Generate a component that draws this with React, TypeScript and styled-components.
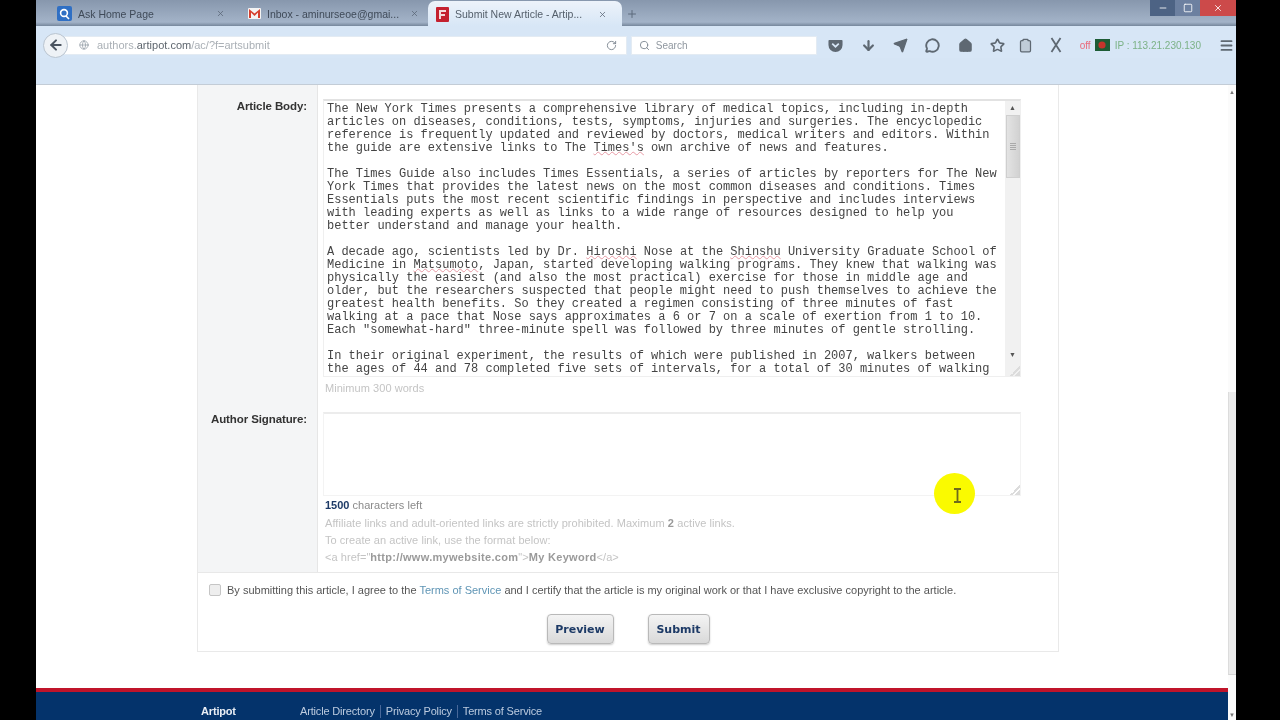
import { Fragment } from "react";
import styled, { createGlobalStyle } from "styled-components";
import {
  ArrowDown,
  ArrowLeft,
  Clipboard,
  Globe,
  Home,
  Menu,
  MessageCircle,
  Minus,
  Plus,
  RotateCw,
  Search,
  Send,
  Square,
  Star,
  X,
} from "lucide-react";

const GlobalStyle = createGlobalStyle`
  html, body {
    margin: 0;
    background: #000;
    overflow: hidden;
  }
  * {
    box-sizing: border-box;
  }
`;

const Screen = styled.div`
  width: 1280px;
  height: 720px;
  padding: 0 44px 0 36px;
  background: #000;
  overflow: hidden;
`;

const Browser = styled.div`
  position: relative;
  width: 1200px;
  height: 720px;
  display: flex;
  flex-direction: column;
  background: #fff;
  font-family: "Liberation Sans", Arial, sans-serif;
  filter: blur(0.7px);
`;

const TabBar = styled.div`
  height: 26px;
  flex: none;
  display: flex;
  padding-left: 10px;
  background: linear-gradient(#8797ad, #a3b3c8 85%, #76879c);
`;

const Tab = styled.div<{ $active?: boolean; $width: number; $closeGap: number }>`
  width: ${(p) => p.$width}px;
  height: ${(p) => (p.$active ? 26 : 25)}px;
  margin-top: 1px;
  padding: 0 ${(p) => p.$closeGap}px 0 ${(p) => (p.$active ? 8 : 11)}px;
  display: flex;
  align-items: center;
  gap: 6px;
  font-size: 10.5px;
  color: ${(p) => (p.$active ? "#55606c" : "#3f4a58")};
  background: ${(p) => (p.$active ? "linear-gradient(#edf3fa, #d6e6f6)" : "transparent")};
  border-radius: ${(p) => (p.$active ? "7px 7px 0 0" : "0")};
`;

const TabTitle = styled.span`
  flex: 1;
  white-space: nowrap;
  overflow: hidden;
`;

const TabClose = styled(X)`
  width: 9px;
  height: 9px;
  flex: none;
  color: #5a6675;
`;

const NewTab = styled(Plus)`
  width: 12px;
  height: 12px;
  margin: 8px 0 0 4px;
  color: #5d6b7c;
`;

const WindowControls = styled.div`
  margin-left: auto;
  height: 16px;
  display: flex;
  color: #fff;
`;

const WindowButton = styled.div<{ $width: number; $bg: string }>`
  width: ${(p) => p.$width}px;
  display: flex;
  align-items: center;
  justify-content: center;
  background: ${(p) => p.$bg};
  svg {
    width: 10px;
    height: 10px;
  }
`;

const Toolbar = styled.div`
  height: 32px;
  flex: none;
  display: flex;
  align-items: center;
  padding: 6px 0 0 7px;
  background: #d7e6f6;
`;

const BackButton = styled.div`
  width: 25px;
  height: 25px;
  flex: none;
  display: flex;
  align-items: center;
  justify-content: center;
  border-radius: 50%;
  border: 1px solid #b9c4d0;
  background: #eef2f6;
  color: #4a5460;
  z-index: 1;
`;

const UrlBar = styled.div`
  width: 565px;
  height: 19px;
  margin-left: -6px;
  padding: 0 2px 0 16px;
  display: flex;
  align-items: center;
  background: #fff;
  border: 1px solid #e3ebf3;
  font-size: 11px;
  color: #aab0b6;
`;

const UrlText = styled.span`
  margin-left: 8px;
  flex: 1;
  b {
    font-weight: 400;
    color: #5e666e;
  }
`;

const SearchBox = styled.div`
  width: 186px;
  height: 19px;
  margin-left: 4px;
  padding-left: 7px;
  display: flex;
  align-items: center;
  gap: 6px;
  background: #fff;
  border: 1px solid #e3ebf3;
  font-size: 10px;
  color: #8f979f;
`;

const IconRow = styled.div`
  margin-left: 2px;
  padding-left: 4px;
  display: flex;
  align-items: center;
  color: #5e6872;
`;

const ToolIcon = styled.div<{ $width: number }>`
  width: ${(p) => p.$width}px;
  flex: none;
  display: flex;
  justify-content: center;
  svg {
    width: 15px;
    height: 15px;
  }
`;

const ProxyStatus = styled.div`
  margin-left: 2px;
  display: flex;
  align-items: center;
  white-space: nowrap;
  font-size: 10px;
  color: #7cb287;
`;

const ProxyOff = styled.span`
  margin-right: 4px;
  color: #ea6a7c;
`;

const ProxyFlag = styled.svg`
  width: 15px;
  height: 12px;
  margin-right: 5px;
`;

const MenuButton = styled(ToolIcon)`
  margin-left: 15px;
  color: #5e6872;
`;

const BookmarksBar = styled.div`
  height: 27px;
  flex: none;
  background: #d6e5f5;
  border-bottom: 1px solid #c3ccd6;
`;

const Viewport = styled.div`
  flex: 1;
  min-height: 0;
  display: flex;
  overflow: hidden;
`;

const Content = styled.div`
  width: 1192px;
  flex: none;
  display: flex;
  flex-direction: column;
`;

const Card = styled.div`
  width: 862px;
  margin-left: 161px;
  border: 1px solid #e9e9e9;
  border-top: 0;
`;

const FormBody = styled.div`
  height: 488px;
  display: flex;
  border-bottom: 1px solid #e8e8e8;
`;

const LabelColumn = styled.div`
  width: 120px;
  flex: none;
  background: #f4f5f6;
  border-right: 1px solid #e6e6e6;
  display: flex;
  flex-direction: column;
  align-items: flex-end;
  padding: 15px 10px 0 0;
`;

const FieldLabel = styled.label<{ $height: number }>`
  height: ${(p) => p.$height}px;
  font-size: 11.5px;
  font-weight: 700;
  letter-spacing: -0.1px;
  color: #333;
`;

const FieldColumn = styled.div`
  flex: 1;
  padding: 14px 0 0 5px;
  display: flex;
  flex-direction: column;
`;

const ArticleBox = styled.div`
  position: relative;
  width: 698px;
  height: 278px;
  flex: none;
  display: flex;
  border: 1px solid #efefef;
  border-top: 2px solid #e2e2e2;
  overflow: hidden;
`;

const ArticleText = styled.div`
  flex: 1;
  padding: 2px 0 0 3px;
  font-family: "Liberation Mono", "Courier New", monospace;
  font-size: 12px;
  line-height: 13px;
  color: #444;
  white-space: pre;
  overflow: hidden;
`;

const Paragraph = styled.p`
  margin: 0 0 13px;
`;

const Misspelled = styled.span`
  text-decoration: underline wavy #e79aa5 1px;
  text-underline-offset: 0;
`;

const BoxScrollbar = styled.div`
  width: 15px;
  flex: none;
  display: flex;
  flex-direction: column;
  align-items: center;
  background: #f1f1f1;
  font-size: 7px;
  color: #555;
`;

const ScrollArrow = styled.div`
  height: 14px;
  flex: none;
  line-height: 14px;
`;

const BoxThumb = styled.div`
  width: 14px;
  height: 63px;
  flex: none;
  display: flex;
  align-items: center;
  justify-content: center;
  background: linear-gradient(90deg, #e3e3e3, #d2d2d2);
  border: 1px solid #cfcfcf;
  &::after {
    content: "";
    width: 6px;
    height: 8px;
    background: repeating-linear-gradient(#aaa 0 1px, transparent 1px 2px);
  }
`;

const BoxSpacer = styled.div`
  flex: 1;
`;

const ResizeGrip = styled.div`
  position: absolute;
  right: 0;
  bottom: 0;
  width: 10px;
  height: 10px;
  background: linear-gradient(135deg, transparent 50%, #dcdcdc 50%, #dcdcdc 62%, transparent 62%, transparent 75%, #dcdcdc 75%);
`;

const Hint = styled.div<{ $height?: number }>`
  height: ${(p) => p.$height ?? 17}px;
  display: flex;
  align-items: center;
  white-space: pre;
  font-size: 11px;
  letter-spacing: 0.05px;
  color: #c4c4c4;
  padding-left: 2px;
  b {
    color: #9a9a9a;
    letter-spacing: 0.3px;
  }
`;

const CharCount = styled(Hint)`
  color: #8a8a8a;
  b {
    color: #1d3a66;
    margin-right: 3px;
    letter-spacing: 0;
  }
`;

const SignatureBox = styled.div`
  position: relative;
  width: 698px;
  height: 84px;
  margin-top: 14px;
  flex: none;
  border: 1px solid #f3f3f3;
  border-top: 2px solid #ececec;
`;

const AgreementRow = styled.div`
  height: 34px;
  padding-left: 11px;
  display: flex;
  align-items: center;
  gap: 6px;
  white-space: pre;
  font-size: 11px;
  color: #555;
`;

const CheckBox = styled.span`
  width: 12px;
  height: 12px;
  flex: none;
  border: 1px solid #c5c5c5;
  border-radius: 2px;
  background: #eee;
`;

const TermsLink = styled.a`
  color: #5f95b5;
`;

const ButtonRow = styled.div`
  height: 37px;
  padding-top: 7px;
  display: flex;
  justify-content: center;
  gap: 34px;
  margin-bottom: 7px;
`;

const ActionButton = styled.button<{ $width: number }>`
  width: ${(p) => p.$width}px;
  height: 30px;
  padding: 0;
  border: 1px solid #b9b9b9;
  border-radius: 4px;
  background: linear-gradient(#f4f4f4, #d9d9d9);
  box-shadow: 0 1px 2px #ccc;
  font-family: "DejaVu Sans", Verdana, sans-serif;
  font-size: 11px;
  font-weight: 700;
  color: #1d3a66;
`;

const Footer = styled.footer`
  height: 32px;
  margin-top: 36px;
  flex: none;
  padding: 13px 0 0 165px;
  display: flex;
  background: #04336b;
  border-top: 4px solid #c0142a;
  font-size: 11px;
  color: #bccbdf;
  letter-spacing: -0.17px;
`;

const FooterBrand = styled.strong`
  width: 99px;
  color: #e9eef5;
`;

const FooterLink = styled.a<{ $first?: boolean }>`
  height: 13px;
  line-height: 12px;
  padding: 0 5px;
  padding-left: ${(p) => (p.$first ? 0 : 5)}px;
  border-left: ${(p) => (p.$first ? "0" : "1px solid #48689a")};
`;

const PageScrollbar = styled.div`
  width: 8px;
  flex: none;
  display: flex;
  flex-direction: column;
  align-items: center;
  background: #fbfbfb;
  font-size: 6px;
  color: #777;
  padding-top: 4px;
`;

const PageThumb = styled.div`
  width: 8px;
  height: 283px;
  margin-top: 297px;
  flex: none;
  background: #ebebeb;
  border-left: 1px solid #dcdcdc;
  border-bottom: 1px solid #d5d5d5;
`;

const PageArrowDown = styled.div`
  margin-top: auto;
  padding-bottom: 2px;
`;

const CursorSpot = styled.div`
  position: absolute;
  left: 898px;
  top: 473px;
  width: 41px;
  height: 41px;
  display: flex;
  align-items: center;
  justify-content: center;
  border-radius: 50%;
  background: #fafa00;
  color: #6e6a1c;
`;

const CursorBeam = styled.svg`
  width: 9px;
  height: 15px;
  margin: 3px 0 0 5px;
`;

const paragraphs = [
  [
    "The New York Times presents a comprehensive library of medical topics, including in-depth",
    "articles on diseases, conditions, tests, symptoms, injuries and surgeries. The encyclopedic",
    "reference is frequently updated and reviewed by doctors, medical writers and editors. Within",
    "the guide are extensive links to The Times's own archive of news and features.",
  ],
  [
    "The Times Guide also includes Times Essentials, a series of articles by reporters for The New",
    "York Times that provides the latest news on the most common diseases and conditions. Times",
    "Essentials puts the most recent scientific findings in perspective and includes interviews",
    "with leading experts as well as links to a wide range of resources designed to help you",
    "better understand and manage your health.",
  ],
  [
    "A decade ago, scientists led by Dr. Hiroshi Nose at the Shinshu University Graduate School of",
    "Medicine in Matsumoto, Japan, started developing walking programs. They knew that walking was",
    "physically the easiest (and also the most practical) exercise for those in middle age and",
    "older, but the researchers suspected that people might need to push themselves to achieve the",
    "greatest health benefits. So they created a regimen consisting of three minutes of fast",
    "walking at a pace that Nose says approximates a 6 or 7 on a scale of exertion from 1 to 10.",
    'Each "somewhat-hard" three-minute spell was followed by three minutes of gentle strolling.',
  ],
  [
    "In their original experiment, the results of which were published in 2007, walkers between",
    "the ages of 44 and 78 completed five sets of intervals, for a total of 30 minutes of walking",
  ],
];

const spellMarks = /(Times's|Hiroshi|Shinshu|Matsumoto)/;

function ArticleLine({ text }: { text: string }) {
  return (
    <div>
      {text.split(spellMarks).map((part, i) =>
        spellMarks.test(part) ? <Misspelled key={i}>{part}</Misspelled> : <Fragment key={i}>{part}</Fragment>
      )}
    </div>
  );
}

function AskIcon() {
  return (
    <svg width="15" height="15" viewBox="0 0 15 15" style={{ flex: "none" }}>
      <rect width="15" height="15" rx="2" fill="#2f6fc4" />
      <circle cx="7" cy="7" r="3.4" fill="none" stroke="#fff" strokeWidth="1.6" />
      <path d="M9 10l3 3" stroke="#fff" strokeWidth="1.6" />
    </svg>
  );
}

function GmailIcon() {
  return (
    <svg width="13" height="13" viewBox="0 0 13 13" style={{ flex: "none" }}>
      <rect width="13" height="11" y="1" rx="1" fill="#f4f4f4" />
      <path d="M1 2l5.5 4.5L12 2v9h-2V5.5L6.500 9 3 5.500V11H1z" fill="#d6402f" />
    </svg>
  );
}

function ArtipotIcon() {
  return (
    <svg width="13" height="15" viewBox="0 0 13 15" style={{ flex: "none" }}>
      <rect width="13" height="15" rx="1" fill="#c4202f" />
      <path d="M3 3h7v2H5v2h4v2H5v3H3z" fill="#f4d9db" />
    </svg>
  );
}

function PocketIcon() {
  return (
    <svg viewBox="0 0 16 16">
      <path d="M1.500 2h13a1 1 0 0 1 1 1v4.500a7.500 7.500 0 0 1-15 0V3a1 1 0 0 1 1-1z" fill="currentColor" />
      <path d="M4.500 6L8 9.300 11.500 6" fill="none" stroke="#d7e6f6" strokeWidth="1.800" />
    </svg>
  );
}

function TallCrossIcon() {
  return (
    <svg viewBox="0 0 12 16" style={{ width: 12, height: 16 }}>
      <path d="M1.500 1l9 14M10.500 1l-9 14" fill="none" stroke="currentColor" strokeWidth="1.800" />
    </svg>
  );
}

function App() {
  return (
    <Screen>
      <GlobalStyle />
      <Browser>
        <TabBar>
          <Tab $width={191} $closeGap={12}>
            <AskIcon />
            <TabTitle>Ask Home Page</TabTitle>
            <TabClose />
          </Tab>
          <Tab $width={191} $closeGap={9}>
            <GmailIcon />
            <TabTitle>Inbox - aminurseoe@gmai...</TabTitle>
            <TabClose />
          </Tab>
          <Tab $active $width={194} $closeGap={15}>
            <ArtipotIcon />
            <TabTitle>Submit New Article - Artip...</TabTitle>
            <TabClose />
          </Tab>
          <NewTab />
          <WindowControls>
            <WindowButton $width={25} $bg="#4d6384">
              <Minus />
            </WindowButton>
            <WindowButton $width={25} $bg="#6c80a0">
              <Square />
            </WindowButton>
            <WindowButton $width={36} $bg="#cc4a4a">
              <X />
            </WindowButton>
          </WindowControls>
        </TabBar>

        <Toolbar>
          <BackButton>
            <ArrowLeft size={16} strokeWidth={3} />
          </BackButton>
          <UrlBar>
            <Globe size={10} color="#9aa3ac" />
            <UrlText>
              authors.<b>artipot.com</b>/ac/?f=artsubmit
            </UrlText>
            <RotateCw size={11} color="#7d8790" style={{ marginRight: 7 }} />
          </UrlBar>
          <SearchBox>
            <Search size={11} color="#7d8790" />
            Search
          </SearchBox>
          <IconRow>
            <ToolIcon $width={26}>
              <PocketIcon />
            </ToolIcon>
            <ToolIcon $width={40}>
              <ArrowDown strokeWidth={3.5} />
            </ToolIcon>
            <ToolIcon $width={24}>
              <Send fill="currentColor" />
            </ToolIcon>
            <ToolIcon $width={40}>
              <MessageCircle strokeWidth={3} />
            </ToolIcon>
            <ToolIcon $width={25}>
              <Home fill="currentColor" />
            </ToolIcon>
            <ToolIcon $width={40}>
              <Star strokeWidth={2.6} />
            </ToolIcon>
            <ToolIcon $width={16}>
              <Clipboard fill="#c0ccd8" />
            </ToolIcon>
            <ToolIcon $width={44}>
              <TallCrossIcon />
            </ToolIcon>
          </IconRow>
          <ProxyStatus>
            <ProxyOff>off</ProxyOff>
            <ProxyFlag viewBox="0 0 15 12">
              <rect width="15" height="12" fill="#1d5c35" />
              <circle cx="7" cy="6" r="3.600" fill="#c4342c" />
            </ProxyFlag>
            IP : 113.21.230.130
          </ProxyStatus>
          <MenuButton $width={20}>
            <Menu strokeWidth={3} />
          </MenuButton>
        </Toolbar>

        <BookmarksBar />

        <Viewport>
          <Content>
            <Card>
              <FormBody>
                <LabelColumn>
                  <FieldLabel $height={313}>Article Body:</FieldLabel>
                  <FieldLabel $height={20}>Author Signature:</FieldLabel>
                </LabelColumn>
                <FieldColumn>
                  <ArticleBox>
                    <ArticleText>
                      {paragraphs.map((lines, i) => (
                        <Paragraph key={i}>
                          {lines.map((line) => (
                            <ArticleLine key={line} text={line} />
                          ))}
                        </Paragraph>
                      ))}
                    </ArticleText>
                    <BoxScrollbar>
                      <ScrollArrow>▲</ScrollArrow>
                      <BoxThumb />
                      <BoxSpacer />
                      <ScrollArrow>▼</ScrollArrow>
                      <ScrollArrow />
                    </BoxScrollbar>
                    <ResizeGrip />
                  </ArticleBox>
                  <Hint $height={21}>Minimum 300 words</Hint>
                  <SignatureBox>
                    <ResizeGrip />
                  </SignatureBox>
                  <CharCount $height={18}>
                    <b>1500</b>characters left
                  </CharCount>
                  <Hint>
                    Affiliate links and adult-oriented links are strictly prohibited. Maximum <b>2</b> active links.
                  </Hint>
                  <Hint>To create an active link, use the format below:</Hint>
                  <Hint>
                    {'<a href="'}
                    <b>http://www.mywebsite.com</b>
                    {'">'}
                    <b>My Keyword</b>
                    {"</a>"}
                  </Hint>
                </FieldColumn>
              </FormBody>
              <AgreementRow>
                <CheckBox />
                <span>
                  By submitting this article, I agree to the <TermsLink>Terms of Service</TermsLink> and I certify that
                  the article is my original work or that I have exclusive copyright to the article.
                </span>
              </AgreementRow>
              <ButtonRow>
                <ActionButton $width={67}>Preview</ActionButton>
                <ActionButton $width={62}>Submit</ActionButton>
              </ButtonRow>
            </Card>
            <Footer>
              <FooterBrand>Artipot</FooterBrand>
              <FooterLink $first>Article Directory</FooterLink>
              <FooterLink>Privacy Policy</FooterLink>
              <FooterLink>Terms of Service</FooterLink>
            </Footer>
          </Content>
          <PageScrollbar>
            ▲
            <PageThumb />
            <PageArrowDown>▼</PageArrowDown>
          </PageScrollbar>
        </Viewport>

        <CursorSpot>
          <CursorBeam viewBox="0 0 9 15">
            <path d="M1 1h7M4.500 1v13M1 14h7" fill="none" stroke="currentColor" strokeWidth="1.800" />
          </CursorBeam>
        </CursorSpot>
      </Browser>
    </Screen>
  );
}

export default App;
